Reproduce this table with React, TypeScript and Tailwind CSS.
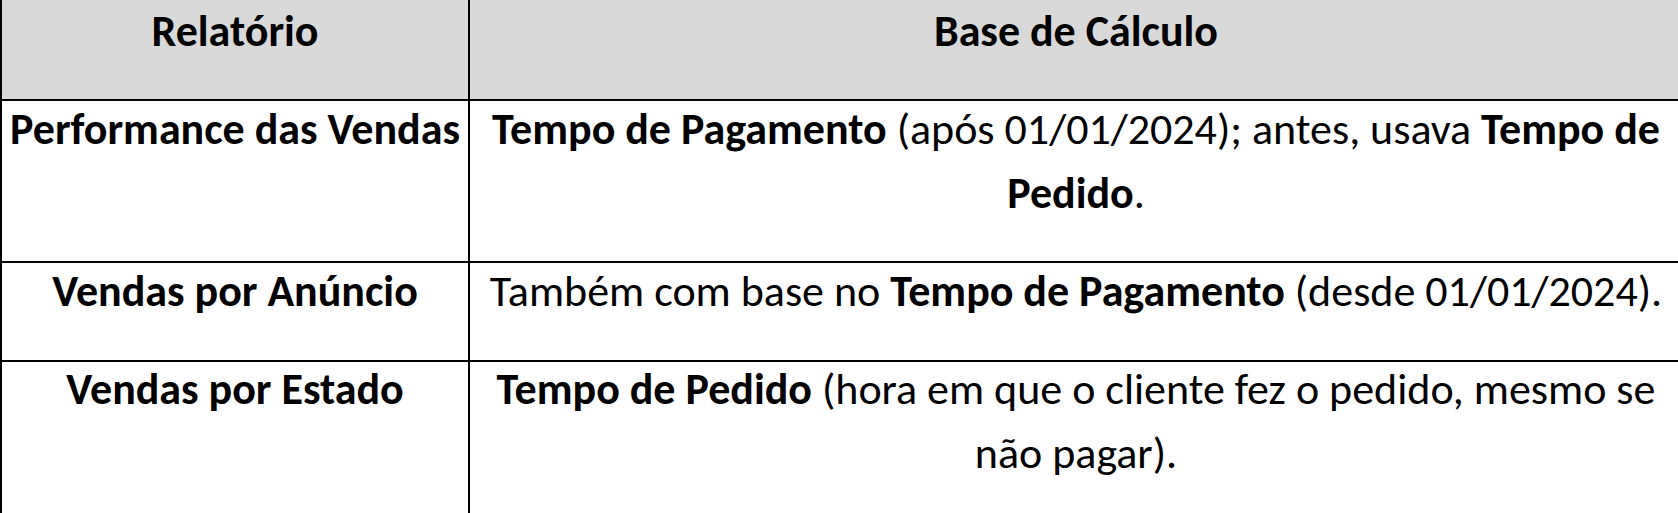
import React from "react";

const font = { fontFamily: "Carlito, Calibri, Lato, 'Open Sans', sans-serif" };

export default function App() {
  return (
    <div
      className="w-[1678px] h-[513px] overflow-hidden bg-white text-black"
      style={font}
    >
      <div className="grid grid-cols-[468px_1212px] border-l-2 border-black text-[44px] leading-[64px]">
        {/* header */}
        <div className="bg-[#d9d9d9] border-r-2 border-b-2 border-black h-[101px] text-center font-bold">
          <div className="-mt-[1px]">Relatório</div>
        </div>
        <div className="bg-[#d9d9d9] border-b-2 border-black h-[101px] text-center font-bold">
          <div className="-mt-[1px]">Base de Cálculo</div>
        </div>

        {/* row 1 */}
        <div className="border-r-2 border-b-2 border-black h-[162px] text-center font-bold whitespace-nowrap">
          <div className="-mt-1">Performance das Vendas</div>
        </div>
        <div className="border-b-2 border-black h-[162px] text-center whitespace-nowrap">
          <div className="-mt-1">
            <b>Tempo de Pagamento</b> (após 01/01/2024); antes, usava <b>Tempo de</b>
            <br />
            <b>Pedido</b>.
          </div>
        </div>

        {/* row 2 */}
        <div className="border-r-2 border-b-2 border-black h-[99px] text-center font-bold">
          <div className="-mt-1">Vendas por Anúncio</div>
        </div>
        <div className="border-b-2 border-black h-[99px] text-center whitespace-nowrap">
          <div className="-mt-1">
            Também com base no <b>Tempo de Pagamento</b> (desde 01/01/2024).
          </div>
        </div>

        {/* row 3 */}
        <div className="border-r-2 border-black h-[160px] text-center font-bold">
          <div className="-mt-[5px]">Vendas por Estado</div>
        </div>
        <div className="h-[160px] text-center whitespace-nowrap">
          <div className="-mt-[5px]">
            <b>Tempo de Pedido</b> (hora em que o cliente fez o pedido, mesmo se
            <br />
            não pagar).
          </div>
        </div>
      </div>
    </div>
  );
}
